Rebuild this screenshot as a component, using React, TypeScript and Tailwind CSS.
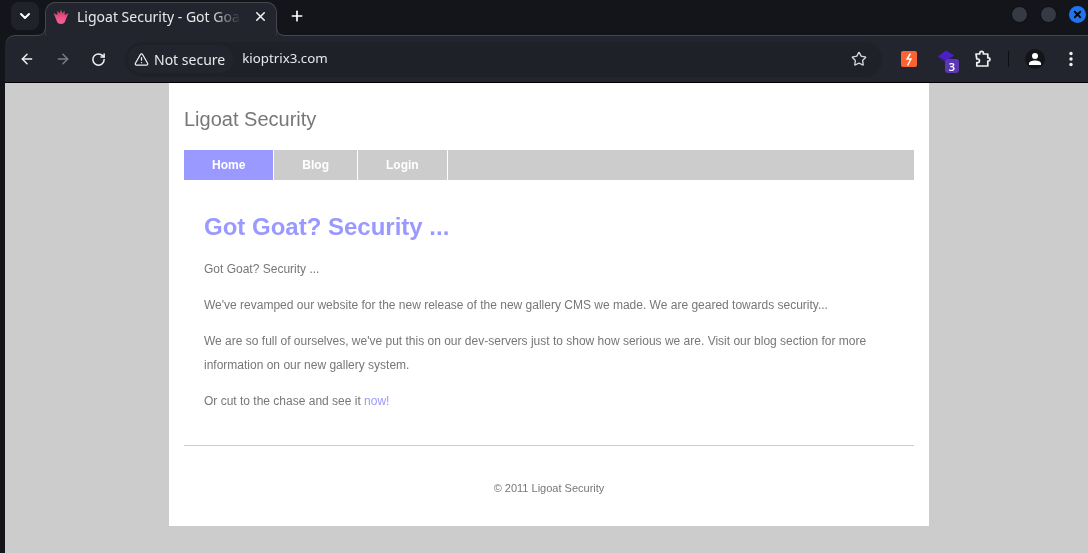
import React from 'react';
import { ArrowLeft, ArrowRight, ChevronDown, Plus, RotateCw, Star, TriangleAlert, X } from 'lucide-react';

const UI_FONT = "font-['Noto_Sans','Open_Sans',sans-serif]";
const PAGE_FONT = "font-['Liberation_Sans',Arial,sans-serif]";

const Favicon = () => (
  <svg width="16" height="16" viewBox="0 0 16 16" className="shrink-0">
    <defs>
      <linearGradient id="hand" x1="0" y1="0" x2="0" y2="1">
        <stop offset="0" stopColor="#c23a5e" />
        <stop offset="0.6" stopColor="#f2538c" />
        <stop offset="1" stopColor="#f0608f" />
      </linearGradient>
    </defs>
    <path
      d="M8 0.500L9.500 4.500 11.500 1.500 11.800 6 15.500 4 12.800 10.500Q11.800 15 8 15 4.200 15 3.200 10.500L0.500 4 4.200 6 4.500 1.500 6.500 4.500z"
      fill="url(#hand)"
    />
  </svg>
);

const PuzzleIcon = () => (
  <svg width="18" height="18" viewBox="0 0 18 18" fill="none" stroke="#f1f1f3" strokeWidth="1.700" strokeLinejoin="round">
    <path d="M2 4h3.800V3.200a1.800 1.800 0 0 1 3.600 0V4h4.400v3.800h.6a1.600 1.600 0 0 1 0 3.200h-.6v5H2.800v-3.400h.8a1.800 1.800 0 0 0 .2-3.600H2.800z" />
  </svg>
);

const ProfileIcon = () => (
  <svg width="14" height="14" viewBox="0 0 14 14" fill="white">
    <circle cx="7" cy="4" r="3" />
    <path d="M1 13v-1.500C1 9.500 4 8.500 7 8.500s6 1 6 3V13z" />
  </svg>
);

const MenuDots = () => (
  <svg width="18" height="18" viewBox="0 0 18 18" fill="#f1f1f3">
    <circle cx="9" cy="3.500" r="1.700" />
    <circle cx="9" cy="9" r="1.700" />
    <circle cx="9" cy="14.500" r="1.700" />
  </svg>
);

const TabStrip = () => (
  <div className="flex h-[35px] items-end bg-[#14151a] pl-[11px]">
    <div className="mb-[5px] mr-[6px] flex h-[28px] w-[28px] items-center justify-center rounded-lg bg-[#20222a]">
      <ChevronDown className="h-4 w-4 text-white" strokeWidth={3} />
    </div>
    <div className="relative z-10 -mb-px flex h-[34px] w-[232px] items-center rounded-t-[10px] border border-b-0 border-[#46474d] bg-[#23252e] pb-[6px] pl-[7px] pr-[8px]">
      <svg width="9" height="9" viewBox="0 0 9 9" fill="none" className="absolute -left-[9px] bottom-0">
        <path d="M0 8.500Q8.500 8.500 8.500 0V9H0z" fill="#23252e" />
        <path d="M0 8.500Q8.500 8.500 8.500 0" stroke="#46474d" />
      </svg>
      <svg width="9" height="9" viewBox="0 0 9 9" fill="none" className="absolute -right-[9px] bottom-0">
        <path d="M9 8.500Q0.500 8.500 0.500 0V9H9z" fill="#23252e" />
        <path d="M9 8.500Q0.500 8.500 0.500 0" stroke="#46474d" />
      </svg>
      <Favicon />
      <span className="ml-[8px] w-[164px] overflow-hidden whitespace-nowrap text-[14px] text-[#e8e9ec] [mask-image:linear-gradient(to_right,black_82%,transparent)]">
        Ligoat Security - Got Goat? Security
      </span>
      <X className="ml-auto h-[15px] w-[15px] text-[#f1f1f3]" strokeWidth={2.500} />
    </div>
    <div className="mb-[11px] ml-[12px]">
      <Plus className="h-[16px] w-[16px] text-white" strokeWidth={2.500} />
    </div>
    <div className="mb-[12px] ml-auto mr-[2px] flex items-center gap-[12px]">
      <span className="h-[17px] w-[17px] rounded-full border border-[#0c0d10] bg-[#363a45]" />
      <span className="h-[17px] w-[17px] rounded-full border border-[#0c0d10] bg-[#363a45]" />
      <span className="flex h-[17px] w-[17px] items-center justify-center rounded-full bg-[#2273ee]">
        <X className="h-[11px] w-[11px] text-[#08090c]" strokeWidth={4} />
      </span>
    </div>
  </div>
);

const Toolbar = () => (
  <div className="ml-[5px] flex h-[48px] items-center rounded-tl-[10px] border-t border-b border-t-[#46474d] border-b-black bg-[#23252e]">
    <ArrowLeft className="ml-[14px] h-[16px] w-[16px] text-[#f1f1f3]" strokeWidth={2.200} />
    <ArrowRight className="ml-[20px] h-[16px] w-[16px] text-[#7b7d85]" strokeWidth={2.200} />
    <RotateCw className="ml-[20px] h-[15px] w-[15px] text-[#f1f1f3]" strokeWidth={2.400} />
    <div className="ml-[19px] flex h-[35px] w-[757px] items-center rounded-full bg-[#1f2129] pl-[3px]">
      <div className="flex h-[28px] items-center rounded-full bg-[#23252e] pl-[6px] pr-[8px]">
        <TriangleAlert className="h-[15px] w-[15px] text-[#f1f1f3]" strokeWidth={2} />
        <span className="ml-[5px] text-[14px] text-[#e8e9ec]">Not secure</span>
      </div>
      <span className="ml-[9px] text-[13.3px] text-[#e8e9ec]">kioptrix3.com</span>
      <Star className="ml-auto mr-[15px] h-[16px] w-[16px] text-[#d4d5d9]" strokeWidth={2} />
    </div>
    <div className="ml-[19px] flex h-[16px] w-[16px] items-center justify-center rounded-[2px] bg-[#fb6330]">
      <svg width="10" height="13" viewBox="0 0 10 13" fill="none" stroke="white" strokeWidth="1.400">
        <path d="M6.500 0.500L3 6h4L3.500 12.500" />
      </svg>
    </div>
    <div className="relative ml-[21px] h-[18px] w-[22px]">
      <svg width="16" height="14" viewBox="0 0 16 14">
        <path d="M8 0.500l8 5-8 7.500-8-6z" fill="#3d1aa6" />
        <path d="M8 0.500l8 5-8 4.500-8-3.500z" fill="#4a1fc4" />
      </svg>
      <span className="absolute left-[7px] top-[9px] flex h-[14px] w-[14px] items-center justify-center rounded-[3px] bg-[#5b36b5] text-[11px] leading-none font-semibold text-white">
        3
      </span>
    </div>
    <div className="ml-[14px]">
      <PuzzleIcon />
    </div>
    <div className="ml-[16px] h-[16px] w-px bg-[#0e0f13]" />
    <div className="ml-[16px] flex h-[20px] w-[20px] items-center justify-center rounded-full bg-[#14151a]">
      <ProfileIcon />
    </div>
    <div className="ml-[17px]">
      <MenuDots />
    </div>
  </div>
);

const navItems = [
  { label: 'Home', active: true },
  { label: 'Blog', active: false },
  { label: 'Login', active: false },
];

const paragraphClass = 'mb-[12px] text-[12px] leading-[24px] text-[#777777]';

const Page = () => (
  <div className="ml-[5px] h-[470px] overflow-hidden bg-[#cccccc] pl-[164px]">
    <div className="h-[443px] w-[760px] bg-white px-[15px] pt-[22px]">
      <div className="text-[20px] leading-[28px] text-[#777777]">Ligoat Security</div>
      <div className="mt-[17px] flex h-[30px] bg-[#cccccc]">
        {navItems.map((item) => (
          <a
            key={item.label}
            className={`border-r border-white px-[28px] text-[12px] leading-[30px] font-bold text-white ${
              item.active ? 'bg-[#9999ff]' : ''
            }`}
          >
            {item.label}
          </a>
        ))}
      </div>
      <div className="px-[20px] pt-[32px]">
        <h1 className="mb-[15px] text-[24px] leading-[30px] font-bold text-[#9999ff]">Got Goat? Security ...</h1>
        <p className={paragraphClass}>Got Goat? Security ...</p>
        <p className={paragraphClass}>
          We've revamped our website for the new release of the new gallery CMS we made. We are geared towards security...
        </p>
        <p className={paragraphClass}>
          We are so full of ourselves, we've put this on our dev-servers just to show how serious we are. Visit our blog
          section for more information on our new gallery system.
        </p>
        <p className={paragraphClass}>
          Or cut to the chase and see it <a className="text-[#9999ff]">now!</a>
        </p>
      </div>
      <div className="mt-[32px] border-t border-[#cccccc] pt-[35px] text-center text-[11px] leading-[14px] text-[#777777]">
        © 2011 Ligoat Security
      </div>
    </div>
  </div>
);

export default function App() {
  return (
    <div className="h-[553px] w-[1088px] overflow-hidden bg-[#14151a] opacity-[0.999]">
      <div className={UI_FONT}>
        <TabStrip />
        <Toolbar />
      </div>
      <div className={PAGE_FONT}>
        <Page />
      </div>
    </div>
  );
}
